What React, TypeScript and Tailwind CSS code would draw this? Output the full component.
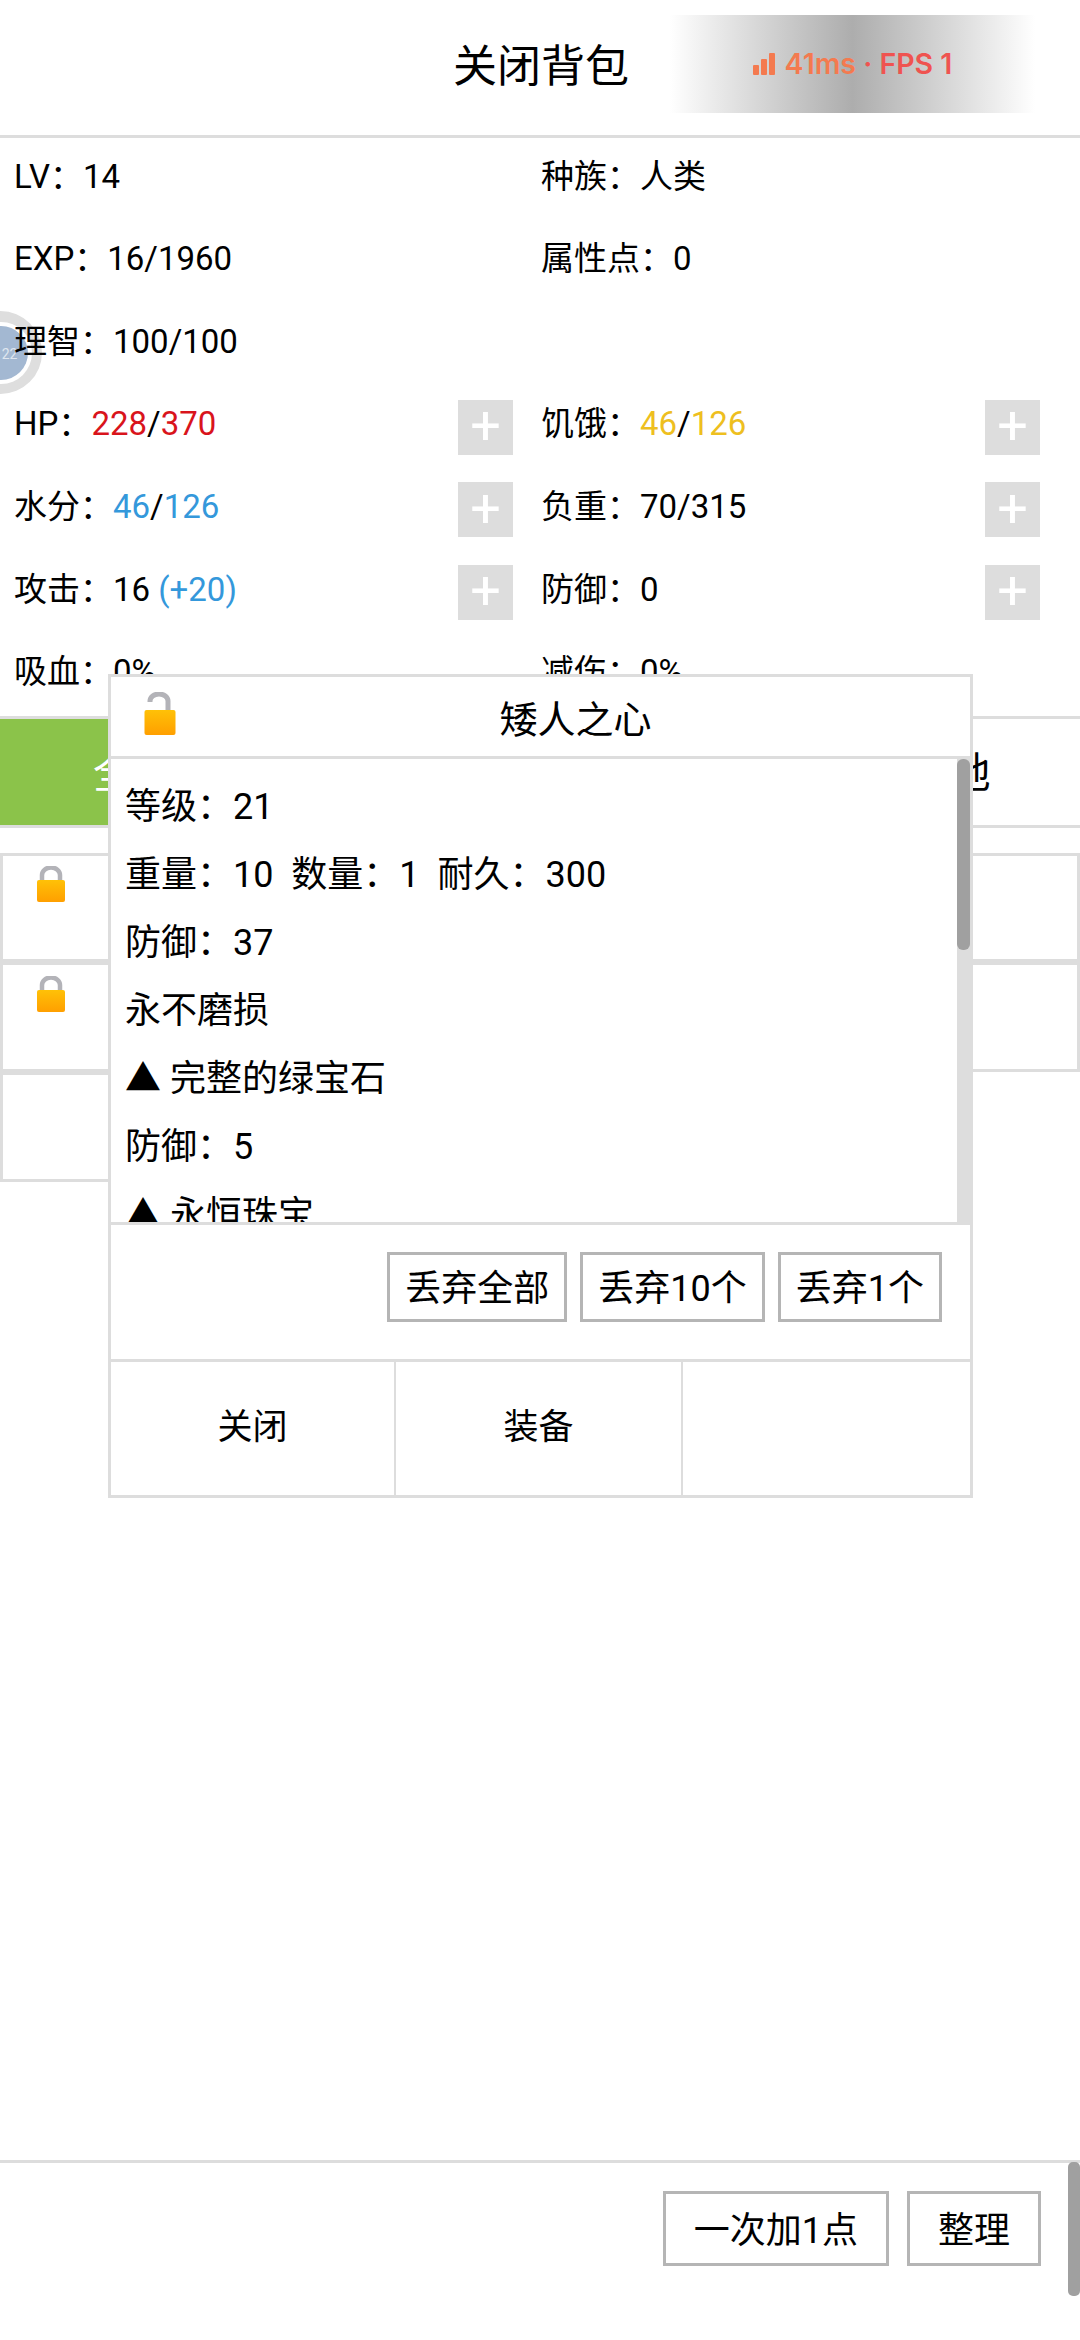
import React from "react";

function ClosedLock() {
  return (
    <svg width="30" height="36" viewBox="0 0 30 36" className="block">
      <defs>
        <linearGradient id="lockClosed" x1="0" y1="0" x2="0" y2="1">
          <stop offset="0" stopColor="#ffc107" />
          <stop offset="1" stopColor="#ff9f00" />
        </linearGradient>
      </defs>
      <path d="M6 16 V9 a9 7.5 0 0 1 18 0 V16" fill="none" stroke="#b3b3b8" strokeWidth="4.5" />
      <rect x="1" y="14" width="28" height="22" rx="2" fill="url(#lockClosed)" />
    </svg>
  );
}

function OpenLock() {
  return (
    <svg width="32" height="43" viewBox="0 0 32 43" className="block">
      <defs>
        <linearGradient id="lockOpen" x1="0" y1="0" x2="0" y2="1">
          <stop offset="0" stopColor="#ffc107" />
          <stop offset="1" stopColor="#ff9f00" />
        </linearGradient>
      </defs>
      <path d="M6 10 V9 a9 7 0 0 1 18 0 V19" fill="none" stroke="#b3b3b8" strokeWidth="5" />
      <rect x="0.5" y="18" width="31" height="25" rx="2" fill="url(#lockOpen)" />
    </svg>
  );
}

function Plus() {
  return (
    <div className="relative w-[55px] h-[55px] bg-[#dddddd] shrink-0 flex items-center justify-center text-white text-[54px] leading-none pb-[2px]">
      +
    </div>
  );
}

function Stat({ children, plus }: { children: React.ReactNode; plus?: boolean }) {
  return (
    <div className="h-[82.6px] flex items-center justify-between whitespace-nowrap">
      <span className="pb-[6px]">{children}</span>
      {plus ? <Plus /> : null}
    </div>
  );
}

export default function App() {
  return (
    <div className="relative w-[1080px] h-[2340px] overflow-hidden bg-white text-black font-['Roboto','Noto_Sans_CJK_SC',sans-serif] flex flex-col">
      {/* header */}
      <div className="relative h-[138px] shrink-0 border-b-[3px] border-[#dddddd] flex items-center justify-center text-[44px]">
        <span className="pl-[2px] pb-[2px]">关闭背包</span>
        <div className="absolute left-[670px] top-[15px] w-[365px] h-[98px] bg-gradient-to-r from-white via-[#adadad] to-white flex items-center justify-center gap-[10px] font-['Inter',sans-serif] font-semibold text-[28.5px]">
          <svg width="22" height="22" viewBox="0 0 22 22" className="block">
            <rect x="0" y="12" width="6" height="10" rx="1" fill="#f47a4f" />
            <rect x="8" y="6" width="6" height="16" rx="1" fill="#f47a4f" />
            <rect x="16" y="0" width="6" height="22" rx="1" fill="#f47a4f" />
          </svg>
          <span className="text-[#f47a4f]">
            41ms <span className="text-[#ef5350]">· FPS 1</span>
          </span>
        </div>
      </div>

      {/* floating ball */}
      <div className="absolute left-[-41px] top-[311px] w-[83px] h-[83px] rounded-full bg-[#dedede] flex items-center justify-center">
        <div className="w-[62px] h-[62px] rounded-full bg-white flex items-center justify-center">
          <div className="w-[54px] h-[54px] rounded-full bg-[#a3b8d2] flex items-center justify-end text-[#dfe6ef] text-[14px] pr-[10px] pt-[4px]">
            22
          </div>
        </div>
      </div>

      {/* stats */}
      <div className="relative h-[578px] shrink-0 grid grid-cols-[527px_1fr] pl-[14px] pr-[40px] text-[33px] grid-rows-[repeat(7,82.6px)]">
        <div className="pr-[28px]"><Stat>LV：14</Stat></div>
        <div><Stat>种族：人类</Stat></div>
        <div className="pr-[28px]"><Stat>EXP：16/1960</Stat></div>
        <div><Stat>属性点：0</Stat></div>
        <div className="pr-[28px]"><Stat>理智：100/100</Stat></div>
        <div></div>
        <div className="pr-[28px]">
          <Stat plus>
            HP：<span className="text-[#d9141c]">228</span>/<span className="text-[#d9141c]">370</span>
          </Stat>
        </div>
        <div>
          <Stat plus>
            饥饿：<span className="text-[#eebf1f]">46</span>/<span className="text-[#eebf1f]">126</span>
          </Stat>
        </div>
        <div className="pr-[28px]">
          <Stat plus>
            水分：<span className="text-[#3498db]">46</span>/<span className="text-[#3498db]">126</span>
          </Stat>
        </div>
        <div><Stat plus>负重：70/315</Stat></div>
        <div className="pr-[28px]">
          <Stat plus>
            攻击：16 <span className="text-[#3498db]">(+20)</span>
          </Stat>
        </div>
        <div><Stat plus>防御：0</Stat></div>
        <div className="pr-[28px]"><Stat>吸血：0%</Stat></div>
        <div><Stat>减伤：0%</Stat></div>
      </div>

      {/* tabs */}
      <div className="shrink-0 h-[112px] border-y-[3px] border-[#dddddd] grid grid-cols-4 text-[42px]">
        <div className="bg-[#8bc34a] text-white flex items-center justify-center pt-[2px]">全部</div>
        <div></div>
        <div></div>
        <div className="flex items-center justify-center pt-[2px] pl-[7px]">基地</div>
      </div>

      {/* item list */}
      <div className="shrink-0 mt-[25px] grid grid-cols-2">
        <div className="h-[109px] border-[3px] border-[#dddddd] pl-[33px] pt-[10px]"><ClosedLock /></div>
        <div className="h-[109px] border-[3px] border-[#dddddd]"></div>
        <div className="h-[110px] border-[3px] border-[#dddddd] pl-[33px] pt-[11px]"><ClosedLock /></div>
        <div className="h-[110px] border-[3px] border-[#dddddd]"></div>
        <div className="h-[110px] border-[3px] border-[#dddddd]"></div>
      </div>

      {/* bottom bar */}
      <div className="mt-auto h-[180px] shrink-0 relative border-t-[3px] border-[#dddddd] flex justify-end items-start pt-[28px] pr-[39px] gap-[18px] text-[36px]">
        <button className="h-[75px] border-[3px] border-[#b5b5b5] px-[28px] pt-[4px] leading-none whitespace-nowrap">一次加1点</button>
        <button className="h-[75px] border-[3px] border-[#b5b5b5] px-[28px] pt-[4px] leading-none whitespace-nowrap">整理</button>
        <div className="absolute right-0 top-[-1px] w-[12px] h-[134px] rounded-[5px] bg-[#a0a0a0]"></div>
      </div>

      {/* dialog */}
      <div className="absolute left-[108px] top-[674px] w-[865px] h-[824px] bg-white border-[3px] border-[#dddddd] flex flex-col">
        <div className="h-[82px] shrink-0 border-b-[3px] border-[#dddddd] flex items-center">
          <div className="w-[70px] shrink-0 pl-[33px] pb-[6px]"><OpenLock /></div>
          <div className="flex-1 text-center text-[38px] pt-[8px]">矮人之心</div>
        </div>
        <div className="relative h-[466px] shrink-0 border-b-[3px] border-[#dddddd] overflow-hidden pl-[14px] pt-[14px] text-[36px]">
          <div className="h-[68px] leading-[68px]">等级：21</div>
          <div className="h-[68px] leading-[68px] whitespace-pre">重量：10  数量：1  耐久：300</div>
          <div className="h-[68px] leading-[68px]">防御：37</div>
          <div className="h-[68px] leading-[68px]">永不磨损</div>
          <div className="h-[68px] leading-[68px]">▲ 完整的绿宝石</div>
          <div className="h-[68px] leading-[68px]">防御：5</div>
          <div className="h-[68px] leading-[68px]">▲ 永恒珠宝</div>
          <div className="absolute right-0 top-0 bottom-0 w-[13px] bg-[#dddddd]">
            <div className="h-[191px] rounded-[6px] bg-[#a0a0a0]"></div>
          </div>
        </div>
        <div className="h-[137px] shrink-0 border-b-[3px] border-[#dddddd] flex justify-end items-start pt-[27px] pr-[28px] gap-[13px] text-[36px]">
          <button className="h-[70px] border-[3px] border-[#b5b5b5] px-[15px] pt-[3px] leading-none whitespace-nowrap">丢弃全部</button>
          <button className="h-[70px] border-[3px] border-[#b5b5b5] px-[15px] pt-[3px] leading-none whitespace-nowrap">丢弃10个</button>
          <button className="h-[70px] border-[3px] border-[#b5b5b5] px-[15px] pt-[3px] leading-none whitespace-nowrap">丢弃1个</button>
        </div>
        <div className="flex-1 flex text-[35px]">
          <div className="w-[285px] border-r-[2px] border-[#dddddd] flex items-center justify-center">关闭</div>
          <div className="w-[287px] border-r-[2px] border-[#dddddd] flex items-center justify-center">装备</div>
          <div className="flex-1"></div>
        </div>
      </div>
    </div>
  );
}
